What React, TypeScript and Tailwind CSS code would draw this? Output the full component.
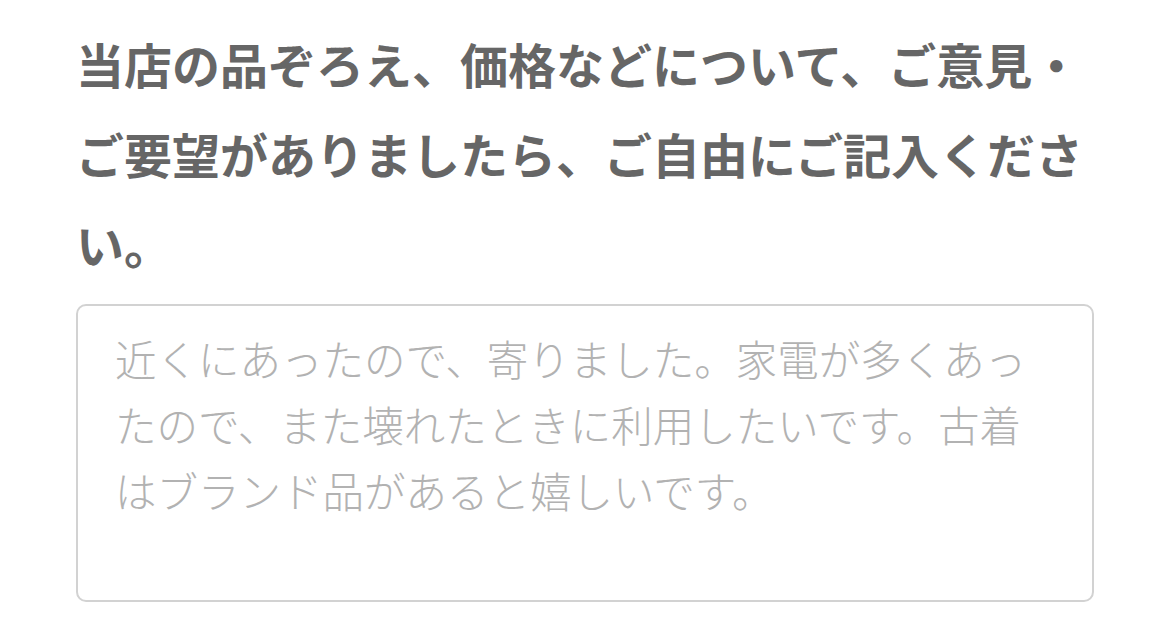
import { useState } from 'react'

export default function App() {
  const [text, setText] = useState('')

  return (
    <div className="min-h-[637px] bg-white px-[76px] pt-[18px]" style={{ fontFamily: '"Noto Sans CJK JP", "Noto Sans", sans-serif' }}>
      <p className="text-[48px] leading-[90px] font-bold text-[#666666]">
        当店の品ぞろえ、価格などについて、ご意見・ご要望がありましたら、ご自由にご記入ください。
      </p>
      <textarea
        value={text}
        onChange={(e) => setText(e.target.value)}
        placeholder="近くにあったので、寄りました。家電が多くあったので、また壊れたときに利用したいです。古着はブランド品があると嬉しいです。"
        className="mt-[16px] block w-full h-[298px] resize-none rounded-[10px] border-2 border-[#d2d2d2] bg-white px-[37px] pt-[19px] text-[41.5px] leading-[66px] font-light text-[#444] placeholder:text-[#b2b2b2] outline-none"
      />
    </div>
  )
}
